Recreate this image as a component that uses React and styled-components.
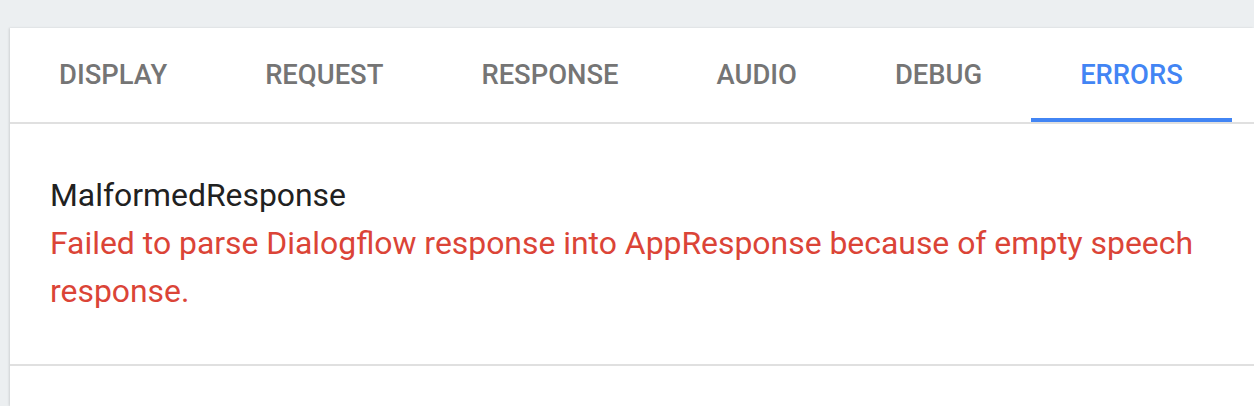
import React from "react";
import styled, { createGlobalStyle } from "styled-components";

const Global = createGlobalStyle`
  html, body { margin: 0; padding: 0; }
  body {
    background: #eceff1;
    font-family: Roboto, "Noto Sans", "Liberation Sans", sans-serif;
    overflow: hidden;
  }
`;

const Page = styled.div`
  padding: 28px 0 0 10px;
  height: 406px;
  box-sizing: border-box;
`;

const Panel = styled.div`
  background: #fff;
  height: 100%;
  box-shadow: -1px 0 2px rgba(0, 0, 0, 0.12);
`;

const TabBar = styled.div`
  display: flex;
  height: 94px;
  border-bottom: 2px solid #e0e0e0;
`;

const Tab = styled.div`
  display: flex;
  align-items: center;
  justify-content: center;
  padding: 0 49px;
  font-size: 27.4px;
  font-weight: 500;
  color: ${(p) => (p.$active ? "#4285f4" : "#757575")};
  box-shadow: ${(p) => (p.$active ? "inset 0 -4px 0 #4285f4" : "none")};
`;

const Content = styled.div`
  padding: 47px 40px 49px 40px;
  border-bottom: 2px solid #e0e0e0;
`;

const Title = styled.div`
  font-size: 31.9px;
  line-height: 48px;
  color: #212121;
`;

const ErrorText = styled.div`
  font-size: 31.9px;
  line-height: 48px;
  color: #db4437;
`;

const tabs = ["DISPLAY", "REQUEST", "RESPONSE", "AUDIO", "DEBUG", "ERRORS"];

export default function App() {
  return (
    <>
      <Global />
      <Page>
        <Panel>
          <TabBar>
            {tabs.map((t) => (
              <Tab key={t} $active={t === "ERRORS"}>
                {t}
              </Tab>
            ))}
          </TabBar>
          <Content>
            <Title>MalformedResponse</Title>
            <ErrorText>
              Failed to parse Dialogflow response into AppResponse because of
              empty speech response.
            </ErrorText>
          </Content>
        </Panel>
      </Page>
    </>
  );
}
